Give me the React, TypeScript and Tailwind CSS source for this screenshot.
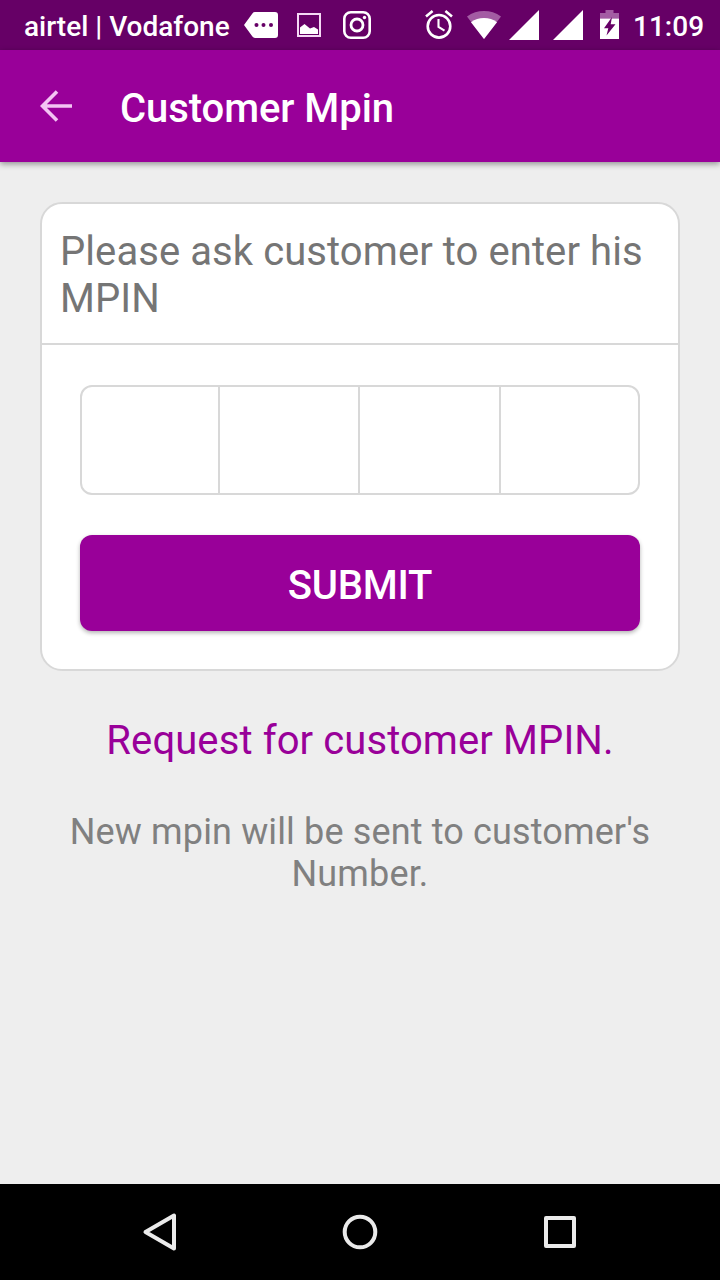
import React from "react";

function StatusBar() {
  return (
    <div className="flex h-[50px] items-center bg-[#660066] pl-6 text-[28px] font-medium leading-none text-white">
      <span className="w-[220px] shrink-0 whitespace-nowrap pt-[3px]">airtel | Vodafone</span>

      {/* message */}
      <svg className="h-[50px] w-[34px] shrink-0" viewBox="0 0 34 50">
        <path d="M11 12H31a3 3 0 0 1 3 3V35a3 3 0 0 1-3 3H11q-1.600 0-2.600-1.400L0 25l8.400-11.600Q9.400 12 11 12Z" fill="#fff" />
        <circle cx="12.500" cy="25" r="2" fill="#660066" />
        <circle cx="19.500" cy="25" r="2" fill="#660066" />
        <circle cx="27" cy="25" r="2" fill="#660066" />
      </svg>

      {/* screenshot */}
      <svg className="ml-[19px] h-[50px] w-6 shrink-0" viewBox="0 0 24 50">
        <rect x="1" y="14" width="22" height="22" fill="none" stroke="#f5d9f5" strokeWidth="2" />
        <path d="M3 34V27.500L7.500 24 13 28.500l4-1.500 4 2.500V34Z" fill="#fff" />
      </svg>

      {/* instagram */}
      <svg className="ml-[22px] h-[50px] w-7 shrink-0" viewBox="0 0 28 50" fill="none" stroke="#fff">
        <rect x="1.300" y="12.300" width="25.400" height="25.400" rx="6.500" strokeWidth="2.600" />
        <circle cx="14" cy="25" r="6" strokeWidth="2.800" />
        <circle cx="21.500" cy="17.500" r="1.700" fill="#fff" stroke="none" />
      </svg>

      {/* alarm */}
      <svg className="ml-[54px] h-[50px] w-7 shrink-0" viewBox="0 0 28 50" fill="none" stroke="#fff" strokeWidth="2.600">
        <circle cx="14" cy="26.300" r="11.300" />
        <path d="M1 16.500 7.600 11M27 16.500 20.400 11" />
        <path d="M13.500 19V27l6 3.600" strokeWidth="2.100" />
      </svg>

      {/* wifi */}
      <svg className="ml-3.5 h-[50px] w-[34px] shrink-0" viewBox="0 0 34 50">
        <path d="M0 16.500C5 12.700 11 11 17 11s12 1.700 17 5.500L17 39Z" fill="#a35ca3" />
        <path d="M4 22.200C8 19.200 12 18 17 18s9 1.200 13 4.200L17 39Z" fill="#fff" />
      </svg>

      <svg className="ml-2 h-[50px] w-[30px] shrink-0" viewBox="0 0 30 50">
        <path d="M0 40 30 10V40Z" fill="#fff" />
      </svg>
      <svg className="ml-3.5 h-[50px] w-[30px] shrink-0" viewBox="0 0 30 50">
        <path d="M0 40 30 10V40Z" fill="#fff" />
      </svg>

      {/* battery */}
      <svg className="ml-[17px] h-[50px] w-[19px] shrink-0" viewBox="0 0 19 50">
        <path d="M0 18.500V13H5.500V10H13.500V13H19V18.500Z" fill="#a35ca3" />
        <path d="M0 18.500H19V39H0Z" fill="#fff" />
        <path d="M12 17 4 28.300H8.300L6.500 35.500 15.500 24.300H10.700Z" fill="#660066" />
      </svg>

      <span className="ml-[14px] whitespace-nowrap pt-[3px]">11:09</span>
    </div>
  );
}

function AppBar() {
  return (
    <header className="relative flex h-28 items-center bg-[#990099] pl-10 shadow-[0_2px_6px_rgba(0,0,0,0.4)]">
      <svg className="h-8 w-8" viewBox="0 0 32 32" fill="none" stroke="#f3c4f3" strokeWidth="3.600">
        <path d="M17 1.500 2.500 16 17 30.500M2.500 16H32" />
      </svg>
      <h1 className="ml-12 pt-1.5 text-[40px] font-medium leading-none tracking-[-0.06px] text-white">Customer Mpin</h1>
    </header>
  );
}

function NavBar() {
  return (
    <nav className="flex h-24 items-center justify-center bg-black">
      <svg className="h-10 w-10" viewBox="0 0 40 40" fill="none" stroke="#ebebeb" strokeWidth="4" strokeLinejoin="round">
        <path d="M34 3.500V36.500L5.500 20Z" />
      </svg>
      <svg className="mx-40 h-10 w-10" viewBox="0 0 40 40" fill="none" stroke="#ebebeb" strokeWidth="4">
        <circle cx="20" cy="20" r="15.300" />
      </svg>
      <svg className="h-10 w-10" viewBox="0 0 40 40" fill="none" stroke="#ebebeb" strokeWidth="4" strokeLinejoin="round">
        <rect x="6" y="6" width="28" height="28" />
      </svg>
    </nav>
  );
}

export default function App() {
  return (
    <div className="flex h-[1280px] w-[720px] flex-col overflow-hidden bg-[#eeeeee] font-['Roboto',sans-serif]">
      <StatusBar />
      <AppBar />

      <main className="flex-1 px-10 pt-10">
        <section className="h-[469px] rounded-[22px] border-2 border-[#d8d8d8] bg-white">
          <p className="h-[141px] border-b-2 border-[#d8d8d8] pl-[18px] pt-[24px] text-[40px] leading-[47px] tracking-[0.08px] text-[#757575]">
            Please ask customer to enter his
            <br />
            MPIN
          </p>
          <div className="px-[38px] pt-10">
            <div className="grid h-[110px] grid-cols-[138px_140px_141px_1fr] rounded-xl border-2 border-[#d8d8d8]">
              <div className="border-r-2 border-[#d8d8d8]" />
              <div className="border-r-2 border-[#d8d8d8]" />
              <div className="border-r-2 border-[#d8d8d8]" />
              <div />
            </div>
            <button className="mt-10 block h-24 w-full rounded-xl bg-[#990099] pt-1.5 text-[40px] font-medium leading-none tracking-[-0.2px] text-white shadow-[0_2px_4px_rgba(0,0,0,0.3)]">
              SUBMIT
            </button>
          </div>
        </section>

        <p className="mt-[46px] text-center text-[40px] leading-[47px] tracking-[0.1px] text-[#990099]">Request for customer MPIN.</p>
        <p className="mt-[47px] text-center text-[36px] leading-[42px] tracking-[0.14px] text-[#808080]">
          New mpin will be sent to customer's
          <br />
          Number.
        </p>
      </main>

      <NavBar />
    </div>
  );
}
